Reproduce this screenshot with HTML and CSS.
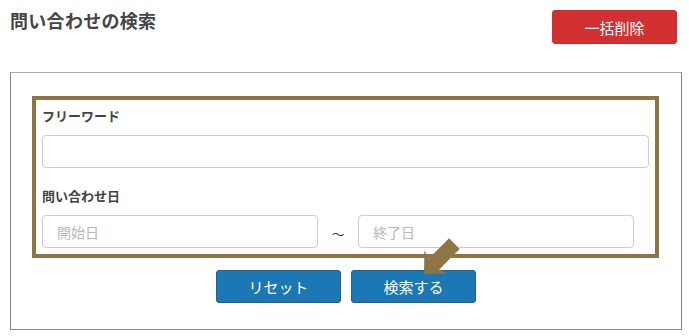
FILE: index.html
```html
<!DOCTYPE html>
<html lang="ja">
<head>
<meta charset="utf-8">
<title>問い合わせの検索</title>
<link rel="stylesheet" href="styles.css">
</head>
<body>
<div class="page">
  <header class="header">
    <h1 class="title">問い合わせの検索</h1>
    <button class="btn btn-danger" type="button">一括削除</button>
  </header>
  <section class="search-box">
    <div class="highlight">
      <div class="field-label">フリーワード</div>
      <input class="input input-full" type="text">
      <div class="field-label field-label-second">問い合わせ日</div>
      <div class="date-row">
        <input class="input input-date" type="text" placeholder="開始日">
        <span class="tilde">〜</span>
        <input class="input input-date input-end" type="text" placeholder="終了日">
      </div>
    </div>
    <div class="actions">
      <button class="btn btn-primary" type="button">リセット</button>
      <button class="btn btn-primary" type="button">検索する</button>
    </div>
    <svg class="pointer" width="40" height="40" viewBox="0 0 40 40" aria-hidden="true">
      <polygon points="1,37 24.7,36.6 16.2,32.4 36.7,11.9 26.1,1.3 5.6,21.8 1.4,13.3" fill="#8f7545"/>
    </svg>
  </section>
</div>
</body>
</html>
```

FILE: styles.css
```css
* { box-sizing: border-box; }

html, body {
  margin: 0;
  padding: 0;
  background: #ffffff;
}

body {
  font-family: "Noto Sans CJK JP", "Noto Sans", sans-serif;
  color: #444444;
}

.page {
  width: 689px;
  height: 336px;
  overflow: hidden;
}

.header {
  display: flex;
  justify-content: space-between;
  align-items: flex-start;
  padding: 10px 12px 0 10px;
  height: 44px;
}

.title {
  margin: 0;
  font-size: 18px;
  line-height: 20px;
  font-weight: 700;
  color: #454545;
  letter-spacing: 0.3px;
}

.btn {
  font-family: "Noto Sans CJK JP", "Noto Sans", sans-serif;
  font-size: 15px;
  color: #ffffff;
  border-radius: 3px;
  width: 125px;
  height: 34px;
  padding: 0;
  cursor: pointer;
  line-height: 1;
}

.btn-danger {
  background: #d33131;
  border: 1px solid #d02e2e;
}

.btn-primary {
  background: #1c78b4;
  border: 1px solid #2c5f86;
  height: 33px;
}

.search-box {
  position: relative;
  margin: 28px 0 0 10px;
  width: 672px;
  height: 258px;
  border: 1px solid #888888;
  border-top-color: #aaaaaa;
  padding: 23px 22px 0 21px;
}

.highlight {
  width: 627px;
  height: 162px;
  border: 4px solid #8f7545;
  padding: 6px;
}

.field-label {
  font-size: 13px;
  line-height: 20px;
  font-weight: 700;
  color: #444444;
  margin-bottom: 9px;
}

.field-label-second {
  margin-top: 18px;
}

.input {
  display: block;
  height: 33px;
  border: 1px solid #cccccc;
  border-radius: 4px;
  background: #ffffff;
  font-family: "Noto Sans CJK JP", "Noto Sans", sans-serif;
  font-size: 14px;
  padding: 0 14px;
  margin: 0;
  outline: none;
}

.input::placeholder {
  color: #b8b8b8;
}

.input-full {
  width: 607px;
}

.date-row {
  display: flex;
  align-items: center;
}

.input-date {
  width: 276px;
}

.tilde {
  width: 40px;
  text-align: center;
  font-size: 13px;
  color: #333333;
  padding-top: 4px;
}

.actions {
  display: flex;
  justify-content: center;
  gap: 10px;
  margin-top: 12px;
  padding-left: 1px;
}

.pointer {
  position: absolute;
  left: 412px;
  top: 164px;
}
```
